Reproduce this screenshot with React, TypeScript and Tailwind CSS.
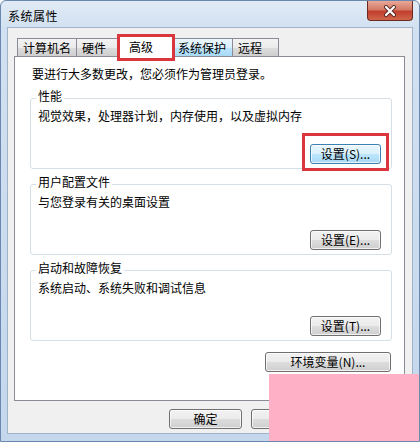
import type { ReactNode } from "react";

const normalBtn =
  "border-[#707070] bg-[linear-gradient(#f2f2f2_0%,#ebebeb_50%,#dddddd_50%,#cfcfcf_100%)]";
const focusBtn =
  "border-[#3c7fb1] bg-[linear-gradient(#eaf6fd_0%,#d9f0fc_50%,#bee6fd_50%,#a7d9f5_100%)]";

function WinButton({
  children,
  focused = false,
  width,
}: {
  children: ReactNode;
  focused?: boolean;
  width: string;
}) {
  return (
    <button
      className={`${width} h-[20px] rounded-[3px] border text-[12px] leading-none text-black shadow-[inset_0_0_0_1px_rgba(255,255,255,0.7)] ${
        focused ? focusBtn : normalBtn
      }`}
    >
      {children}
    </button>
  );
}

function Group({
  title,
  desc,
  button,
  focused = false,
  className = "",
}: {
  title: string;
  desc: string;
  button: string;
  focused?: boolean;
  className?: string;
}) {
  return (
    <div
      className={`relative h-[71px] w-[362px] rounded-[3px] border border-[#d5dfe5] pl-[7px] pt-[11px] ${className}`}
    >
      <span className="absolute -top-[10px] left-[5px] bg-white px-[2px] text-[12px] leading-[14px]">
        {title}
      </span>
      <div className="text-[12px] leading-[12px]">{desc}</div>
      <div className="mt-[18px] flex justify-end pr-[10px]">
        <div className="relative">
          <WinButton width="w-[71px]" focused={focused}>
            {button}
          </WinButton>
          {focused && (
            <div className="pointer-events-none absolute -bottom-[7px] -left-[8px] -right-[8px] -top-[7px] border-[3px] border-[#d9363e]" />
          )}
        </div>
      </div>
    </div>
  );
}

const tabBase =
  "flex h-[18px] items-center border border-b-0 border-[#898c95] pl-[5px] text-[12px] leading-none";
const tabNormal =
  "bg-[linear-gradient(#f3f3f3_0%,#ebebeb_50%,#dddddd_50%,#cfcfcf_100%)]";
const tabHover =
  "bg-[linear-gradient(#eaf6fd_0%,#d9f0fc_50%,#bee6fd_50%,#a7d9f5_100%)]";

export default function App() {
  return (
    <div className="relative flex h-[442px] w-[420px] flex-col overflow-hidden rounded-t-[6px] border border-[#6a88ad] bg-[linear-gradient(180deg,#e1ebf6_0%,#d2e1f1_26px,#c4d7ec_100%)] font-['Noto_Sans_CJK_SC','Noto_Sans',sans-serif] text-black">
      {/* title bar */}
      <div className="flex h-[26px] shrink-0 items-start">
        <span className="ml-[7px] mt-[8px] text-[12px] leading-[14px] tracking-[0.5px]">
          系统属性
        </span>
        <div className="ml-auto mr-[6px] flex h-[20px] w-[46px] items-center justify-center rounded-b-[4px] border border-t-0 border-[#6b2a20] bg-[linear-gradient(#e9a897_0%,#d37b66_45%,#c23e2d_55%,#d0664c_100%)]">
          <svg width="14" height="12" viewBox="0 0 14 12">
            <path d="M3 2 L11 10 M11 2 L3 10" stroke="#5a2a24" strokeWidth="4" strokeLinecap="round" />
            <path d="M3 2 L11 10 M11 2 L3 10" stroke="#ffffff" strokeWidth="2.2" strokeLinecap="round" />
          </svg>
        </div>
      </div>

      {/* client area */}
      <div className="mx-[6px] flex h-[407px] flex-col border border-[#9fb3cb] bg-[#f0f0f0]">
        <div className="ml-[6px] pt-[10px]">
          {/* tabs */}
          <div className="relative z-10 flex h-[18px] items-end pl-[3px]">
            <div className={`${tabBase} ${tabNormal} w-[60px]`}>计算机名</div>
            <div className={`${tabBase} ${tabNormal} -ml-px w-[43px]`}>硬件</div>
            <div className="relative -mb-px flex h-[22px] w-[54px] items-center border border-b-0 border-[#898c95] bg-white pl-[9px] text-[12px] leading-none">
              高级
              <div className="pointer-events-none absolute -bottom-[4px] -left-[3px] -right-[3px] -top-[2px] border-[3px] border-[#d9363e]" />
            </div>
            <div className={`${tabBase} ${tabHover} -ml-px w-[61px]`}>系统保护</div>
            <div className={`${tabBase} ${tabNormal} -ml-px w-[47px]`}>远程</div>
          </div>

          {/* panel */}
          <div className="h-[345px] w-[391px] border border-[#898c95] bg-white pl-[15px] pt-[11px]">
            <div className="pl-[2px] text-[12px] leading-[12px]">
              要进行大多数更改，您必须作为管理员登录。
            </div>
            <Group
              className="mt-[18px]"
              title="性能"
              desc="视觉效果，处理器计划，内存使用，以及虚拟内存"
              button="设置(S)..."
              focused
            />
            <Group
              className="mt-[15px]"
              title="用户配置文件"
              desc="与您登录有关的桌面设置"
              button="设置(E)..."
            />
            <Group
              className="mt-[15px]"
              title="启动和故障恢复"
              desc="系统启动、系统失败和调试信息"
              button="设置(T)..."
            />
            <div className="mt-[11px] flex w-[361px] justify-end">
              <WinButton width="w-[126px]">环境变量(N)...</WinButton>
            </div>
          </div>

          {/* dialog buttons */}
          <div className="mt-[8px] flex w-[392px] justify-end gap-[9px]">
            <WinButton width="w-[73px]">确定</WinButton>
            <WinButton width="w-[73px]">取消</WinButton>
            <WinButton width="w-[73px]">应用(A)</WinButton>
          </div>
        </div>
      </div>

      {/* pink cover */}
      <div className="absolute left-[268px] top-[373px] h-[69px] w-[152px] bg-[#feb0c7]" />
    </div>
  );
}
